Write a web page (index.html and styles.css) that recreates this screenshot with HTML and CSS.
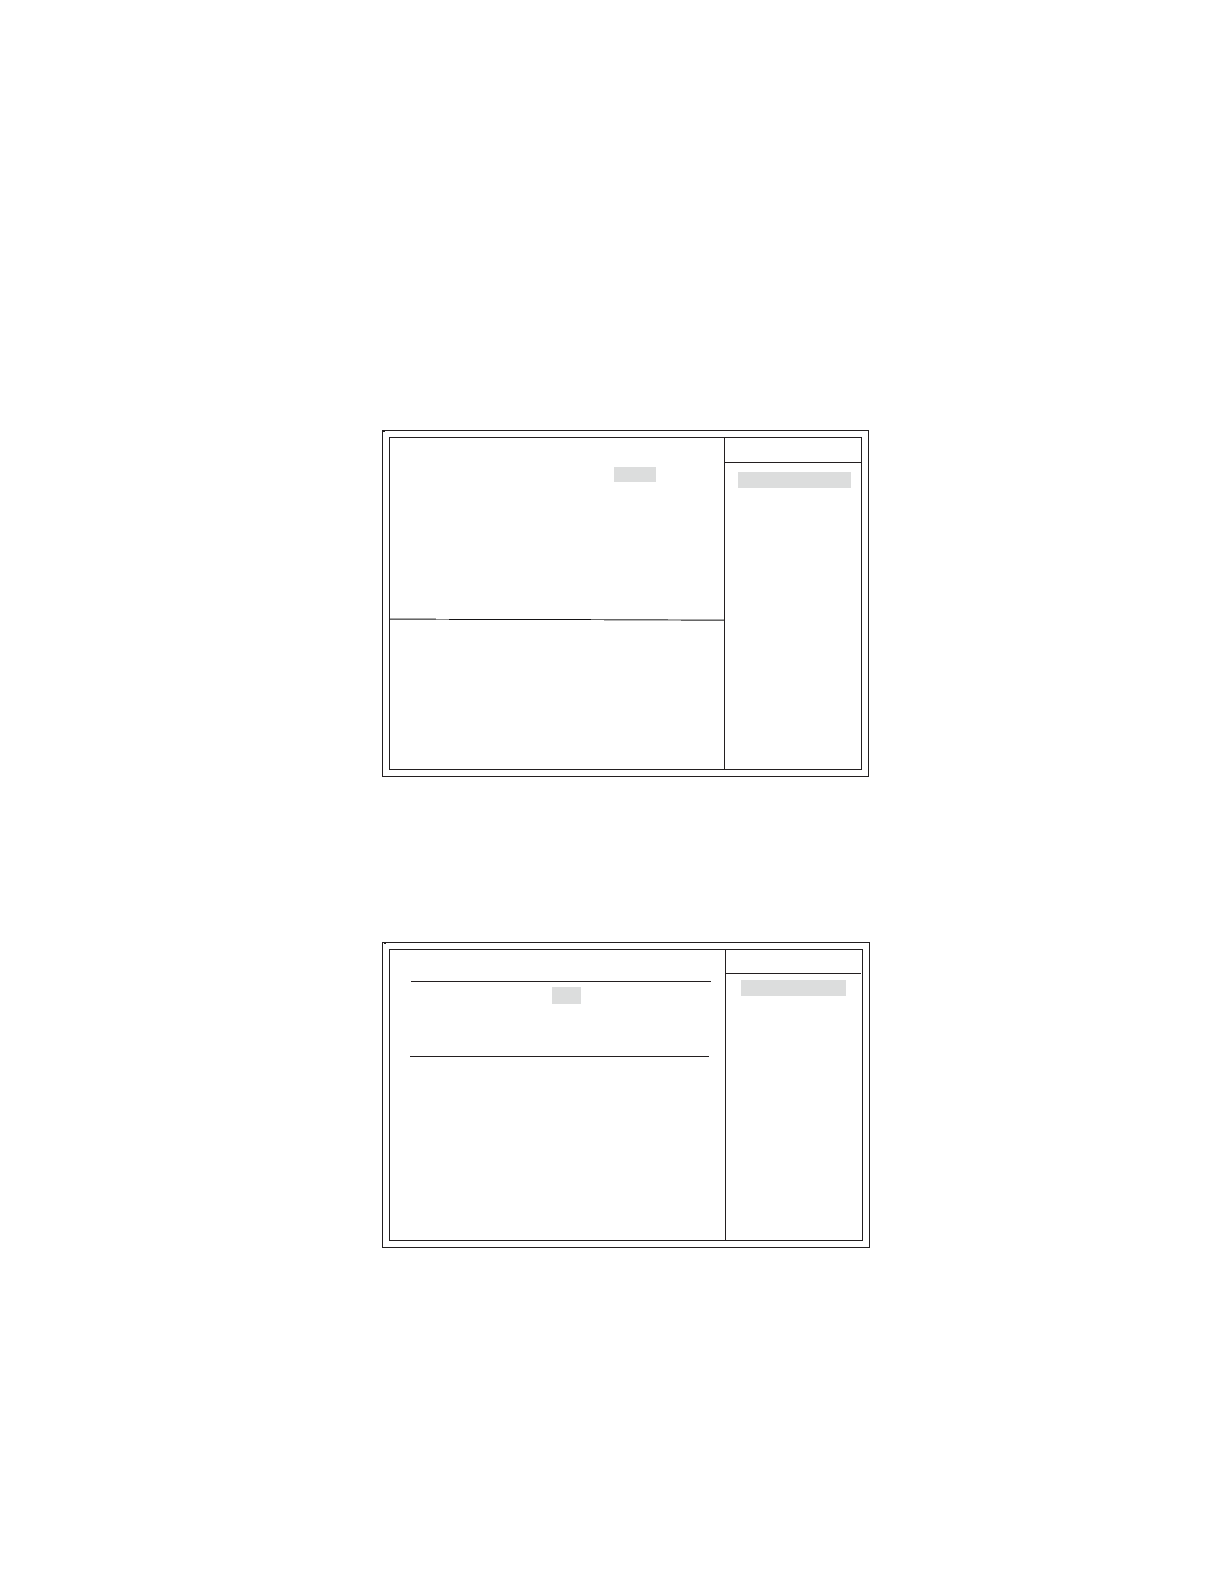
FILE: index.html
```html
<!DOCTYPE html>
<html lang="en">
<head>
    <meta charset="UTF-8">
    <meta name="viewport" content="width=device-width, initial-scale=1.0">
    <title>Setup Screens</title>
    <link rel="stylesheet" href="styles.css">
</head>
<body>
    <main class="page">
        <!-- Screen with a split main area -->
        <section class="screen">
            <div class="frame">
                <div class="content">
                    <div class="upper">
                        <div class="highlight field"></div>
                    </div>
                    <svg class="split" viewBox="0 0 334 3" preserveAspectRatio="none" shape-rendering="crispEdges">
                        <path d="M0 0h46v1H0z" fill="#a8a8a8"/>
                        <path d="M0 1h46v1H0z" fill="#666"/>
                        <path d="M46 1h13v1H46z" fill="#8c8c8c"/>
                        <path d="M59 1h142v1H59z" fill="#151314"/>
                        <path d="M201 1h77v1H201z" fill="#666"/>
                        <path d="M214 2h77v1H214z" fill="#b4b4b4"/>
                        <path d="M278 1h56v1H278z" fill="#a8a8a8"/>
                        <path d="M291 2h43v1H291z" fill="#666"/>
                    </svg>
                    <div class="lower"></div>
                </div>
                <aside class="sidebar">
                    <div class="sidebar-head"></div>
                    <div class="highlight title"></div>
                </aside>
            </div>
        </section>

        <!-- Screen with a ruled block -->
        <section class="screen screen-ruled">
            <div class="frame">
                <div class="content">
                    <div class="ruled">
                        <div class="highlight value"></div>
                    </div>
                    <div class="rule-end"></div>
                </div>
                <aside class="sidebar">
                    <div class="sidebar-head"></div>
                    <div class="highlight title"></div>
                </aside>
            </div>
        </section>
    </main>
</body>
</html>
```
FILE: styles.css
```css
* {
    box-sizing: border-box;
}

body {
    margin: 0;
    background-color: #fff;
    color: #231f20;
    font-family: "Liberation Sans", Arial, sans-serif;
}

.page {
    display: flex;
    flex-direction: column;
    gap: 165px;
    padding: 430px 355px 336px 382px;
}

.screen {
    position: relative;
    padding: 6px;
    border: 1px solid #231f20;
}

/* Small tick in the top left corner */
.screen::before {
    content: '';
    position: absolute;
    top: 0;
    left: 0;
    width: 2px;
    height: 1px;
    background-color: #231f20;
}

.frame {
    display: grid;
    grid-template-columns: 1fr 137px;
    border: 1px solid #231f20;
}

.highlight {
    background-color: #dcdddd;
}

.upper {
    height: 180px;
    padding: 29px 0 0 224px;
}

.field {
    width: 42px;
    height: 15px;
}

.split {
    display: block;
    width: 100%;
    height: 3px;
}

.lower {
    height: 148px;
}

.sidebar {
    border-left: 1px solid #231f20;
}

.sidebar-head {
    height: 25px;
    border-bottom: 1px solid #231f20;
}

.title {
    height: 16px;
    margin: 9px 10px 0 13px;
}

/* Second screen */
.screen-ruled {
    margin-right: -1px;
}

    .screen-ruled::before {
        left: 1px;
    }

    .screen-ruled .frame {
        min-height: 292px;
    }

    .screen-ruled .sidebar-head {
        height: 24px;
        margin-right: 1px;
    }

    .screen-ruled .title {
        margin: 6px 16px 0 15px;
    }

.ruled {
    height: 75px;
    margin: 31px 14px 0 21px;
    padding: 5px 0 0 141px;
    border-top: 1px solid #231f20;
}

.value {
    width: 29px;
    height: 17px;
}

.rule-end {
    margin: 0 16px 0 20px;
    border-top: 1px solid #231f20;
}
```
